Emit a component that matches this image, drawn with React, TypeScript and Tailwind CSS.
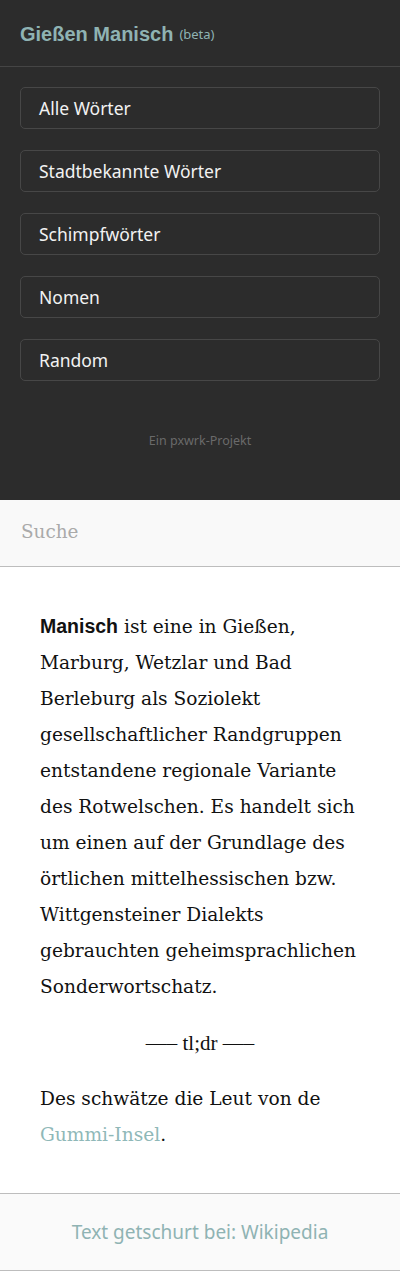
import React from "react";

const items = ["Alle Wörter", "Stadtbekannte Wörter", "Schimpfwörter", "Nomen", "Random"];

export default function App() {
  return (
    <div className="w-[400px] min-h-[1271px] bg-white">
      <div className="bg-[#2c2c2c] h-[500px] flex flex-col">
        <div className="h-[67px] border-b border-[#454545] flex items-center px-5 pt-[1px]">
          <span className="text-[20px] font-bold text-[#8fb3b3] font-['Liberation_Sans',sans-serif]">Gießen Manisch</span>
          <span className="ml-[6px] mt-[3px] text-[13px] text-[#8fb3b3] font-['Noto_Sans',sans-serif]">(beta)</span>
        </div>
        <div className="flex flex-col gap-[21px] px-5 pt-5">
          {items.map((t) => (
            <div
              key={t}
              className="h-[42px] rounded-[5px] border border-[#474747] flex items-center pl-[18px] text-[17.5px] text-[#f2f2f2] font-['Noto_Sans',sans-serif]"
            >
              {t}
            </div>
          ))}
        </div>
        <div className="mt-[51px] text-center text-[12.5px] text-[#6a6a6a] font-['Noto_Sans',sans-serif]">Ein pxwrk-Projekt</div>
      </div>
      <div className="h-[67px] bg-[#f9f9f9] border-b border-[#bdbdbd] flex items-center px-[21px]">
        <span className="text-[18.4px] text-[#aaaaaa] font-['DejaVu_Serif',serif] mt-[-2px]">Suche</span>
      </div>
      <div className="px-10 pt-[41px] pb-[40px] font-['DejaVu_Serif',serif] text-[18.6px] leading-[36px] text-[#111]">
        <p>
          <b className="font-['Liberation_Sans',sans-serif] font-bold text-[19.5px]">Manisch</b> ist eine in Gießen, Marburg, Wetzlar und Bad Berleburg als Soziolekt gesellschaftlicher Randgruppen entstandene regionale Variante des Rotwelschen. Es handelt sich um einen auf der Grundlage des örtlichen mittelhessischen bzw. Wittgensteiner Dialekts gebrauchten geheimsprachlichen Sonderwortschatz.
        </p>
        <p className="text-center mt-[20px] font-['Liberation_Serif',serif] text-[21px]">—– tl;dr —–</p>
        <p className="mt-[20px]">
          Des schwätze die Leut von de <span className="text-[#8fb8b8]">Gummi-Insel</span>.
        </p>
      </div>
      <div className="h-[78px] bg-[#fafafa] border-t border-b border-[#bdbdbd] flex items-center justify-center text-[19px] text-[#8fb3b3] font-['Noto_Sans',sans-serif]">
        Text getschurt bei: Wikipedia
      </div>
    </div>
  );
}
